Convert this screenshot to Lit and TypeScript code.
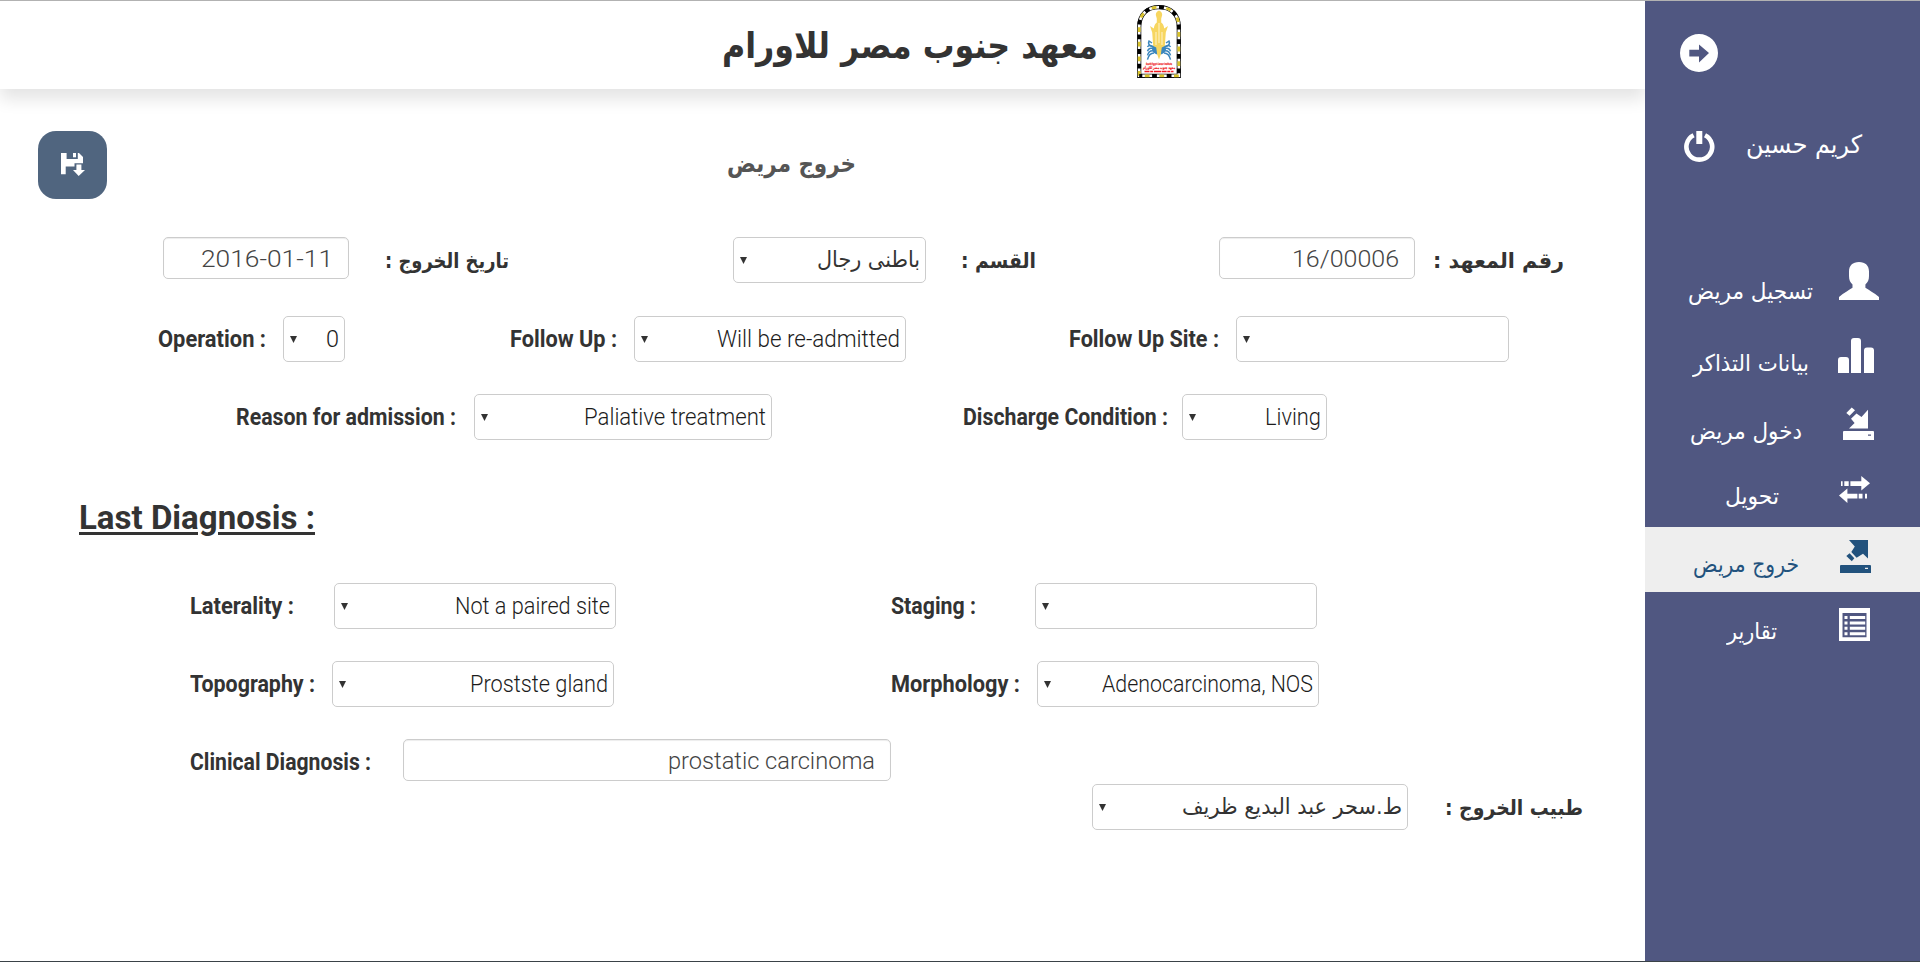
import { LitElement, html, css, svg } from "lit";
import { customElement, property } from "lit/decorators.js";
import { classMap } from "lit/directives/class-map.js";

/** One line of text, condensed or widened to the given width in pixels. */
@customElement("fit-text")
class FitText extends LitElement {
  @property({ type: Number }) w = 100;
  @property() text = "";
  @property({ type: Boolean }) underline = false;
  static styles = css`
    :host { display: block; white-space: nowrap; direction: ltr; }
    .line { display: inline-block; transform-origin: 0 50%; white-space: nowrap; unicode-bidi: isolate; }
    .rtl { direction: rtl; }
    .under { text-decoration: underline; text-decoration-thickness: 3px; text-underline-offset: 3px; }
  `;
  render() {
    const rtl = /[\u0600-\u06ff]/.test(this.text);
    return html`<span class=${classMap({ line: true, rtl, under: this.underline })}>${this.text}</span>`;
  }
  updated() {
    this.style.width = this.w + "px";
    const line = this.renderRoot.querySelector(".line") as HTMLElement;
    const fit = () => {
      line.style.transform = "none";
      const natural = line.getBoundingClientRect().width;
      if (natural) line.style.transform = `scaleX(${this.w / natural})`;
    };
    fit();
    document.fonts.ready.then(fit);
  }
}

const isArabic = (t: string) => /[\u0600-\u06ff]/.test(t);

const label = (text: string, w: number) =>
  html`<fit-text class=${classMap({ label: true, ar: isArabic(text) })} .text=${text} .w=${w}></fit-text>`;

const select = (text: string, w: number) => html`
  <div class="select">
    <svg class="caret" width="7" height="7" viewBox="0 0 7 7"><path d="M0 0h7L3.5 7z" /></svg>
    ${text ? html`<fit-text class=${classMap({ value: true, ar: isArabic(text) })} .text=${text} .w=${w}></fit-text>` : ""}
  </div>`;

const input = (text: string, w: number) => html`
  <div class="input"><fit-text class="typed" .text=${text} .w=${w}></fit-text></div>`;

const icons = {
  back: html`<svg width="38" height="38" viewBox="0 0 38 38"><path fill-rule="evenodd" d="M19 0a19 19 0 1 1 0 38a19 19 0 0 1 0-38zM9.3 15.8v6.6h9.7v6.2L29 19L19 10.6v5.2z" /></svg>`,
  power: html`<svg width="31" height="31" viewBox="0 0 31 31"><path d="M12.3 0h6v13h-6z" /><path fill="none" stroke="#fff" stroke-width="4.6" d="M9.6 4.2A12.9 12.9 0 1 0 21 4.2" /></svg>`,
  user: html`<svg width="40" height="38" viewBox="0 0 40 38"><path d="M20 0c6.400 0 10 3.600 10 9.500v4.500c0 3.800-1.200 6.400-3.600 8.600v3.200c3.500 2.300 8.500 5 13.600 9.200v3H0v-3c5-4.200 10-6.900 13.500-9.200v-3.200C11.200 20.400 10 17.800 10 14V9.500C10 3.600 13.600 0 20 0z" /></svg>`,
  stats: html`<svg width="36" height="35" viewBox="0 0 36 35"><path d="M0 35V22q0-3 3-3h5q3 0 3 3v13zM13 35V3q0-3 3-3h4q3 0 3 3v32zM26 35V12.500q0-3 3-3h4q3 0 3 3V35z" /></svg>`,
  enter: html`<svg width="31" height="33" viewBox="0 0 31 33"><path d="M25 2.800V21.600H6l5.600-5.600L8 11.800l5.500-5.400L18.500 10z" /><path d="M3.300 6L8.700 0.500l3.300 2.700L6.600 8.700z" /><path fill-rule="evenodd" d="M0 25q0-1 1-1h29q1 0 1 1v8H0zM25 27.400v1.400h3v-1.400z" /></svg>`,
  transfer: html`<svg width="31" height="27" viewBox="0 0 31 27"><path d="M2 5.300h1.600v4.600H2zM5.300 5.300h4.400v4.600H5.300zM11.400 5.300H22.300V0L31 7.200l-8.700 7.200V9.900H11.400zM8.400 12.500v5.300h10v4.600h-10V27L0 19.600zM19.700 17.800h3.800v4.600h-3.800zM26 17.800h2v4.600h-2z" /></svg>`,
  exit: html`<svg width="31" height="33" viewBox="0 0 31 33"><path d="M9 0H28V18.600L23 13.800L16.600 17.800L11.300 12L14.800 6.600z" /><path d="M6.300 16L9.600 13.200L14.300 18.300L11.800 21.200z" /><path fill-rule="evenodd" d="M0 26q0-1 1-1h29q1 0 1 1v7H0zM25 27.700v1.400h3v-1.400z" /></svg>`,
  list: html`<svg width="31" height="33" viewBox="0 0 31 33"><path fill-rule="evenodd" d="M0 0h31v33H0zM3.500 5v24.300h24V5z" /><path d="M5.500 8h3v3h-3zM10.800 8h15.400v3H10.800zM5.500 13.400h3v3h-3zM10.800 13.400h15.400v3H10.800zM5.500 18.800h3v3h-3zM10.800 18.800h15.400v3H10.800zM5.500 24.200h3v3h-3zM10.800 24.200h15.400v3H10.800z" /></svg>`,
  save: html`<svg width="24" height="23" viewBox="0 0 24 23"><path fill-rule="evenodd" d="M0 0h5.600v6h11.200V0h1.200l4 4v6.200h-8.500v3.300H4.700v7.700H0z" /><path d="M12 0h3v4.300h-3z" /><path d="M15.400 11.600h5v5.400h3.600L17.700 23L12 17h3.400z" /></svg>`,
};

const arch = "M2.200 70.800V22C2.200 9 10.500 2.200 22 2.200S41.800 9 41.800 22V70.800z";
const claws = [0, 1, 2, 3].map(
  (i) => svg`<path d="M17 ${42 + i * 2}q-5 ${-3 + i}-6.500 ${i * 2.200}M27 ${42 + i * 2}q5 ${-3 + i} 6.500 ${i * 2.200}" />`
);
const logo = html`<svg class="logo" width="44" height="73" viewBox="0 0 44 73">
  <path d=${arch} fill="#fff" stroke="#111" stroke-width="4.200" />
  <path d=${arch} fill="none" stroke="#fff" stroke-width="2.600" />
  <path d=${arch} fill="none" stroke="#d8c22a" stroke-width="2.800" stroke-dasharray="4.800 9.800" />
  <path d=${arch} fill="none" stroke="#000" stroke-width="3.800" stroke-dasharray="4.800 9.800" stroke-dashoffset="-7.300" />
  <g fill="none" stroke="#3b86bd" stroke-width="1.500">
    ${claws}
    <path d="M16 42q-6-2-4-6l3 2M28 42q6-2 4-6l-3 2" />
  </g>
  <ellipse cx="22" cy="44" rx="7" ry="5.500" fill="#3b86bd" />
  <path fill="#f7d660" d="M22 5.500q3.200 1 3.200 4.500l-1 3.500v4q2.500 1.500 3 6l3.800-2.500-2.200 6.500-1 13.500-3 1.500-1 7-1.800 5-1.800-5-1-7-3-1.500-1-13.500-2.200-6.500 3.800 2.500q.5-4.500 3-6v-4l-1-3.500q0-3.500 3.200-4.500z" />
  <path fill="none" stroke="#fff7d8" stroke-width=".9" d="M22 18v20M19 27v13M25 27v13" />
  <g fill="#f01820" stroke="#f01820" stroke-width=".2" font-family="DejaVu Sans" font-weight="bold" text-anchor="middle">
    <text transform="translate(22 59.700) scale(.5 1)" font-size="3.200">South Egypt Cancer Institute</text>
    <text transform="translate(22 63.600) scale(.68 1)" font-size="4">معهد جنوب مصر للاورام</text>
  </g>
  <path stroke="#f01820" stroke-width="1.500" stroke-dasharray="5 .7 3 .8 7 .6" d="M7.500 66.600h29" />
</svg>`;

interface Item { text: string; icon: unknown; start: number; w: number; iconX: number; cls: string }
const menu: Item[] = [
  { text: "تسجيل مريض", icon: icons.user, start: 43, w: 125, iconX: 194, cls: "register" },
  { text: "بيانات التذاكر", icon: icons.stats, start: 48, w: 116, iconX: 193, cls: "tickets" },
  { text: "دخول مريض", icon: icons.enter, start: 45, w: 112, iconX: 198, cls: "enter" },
  { text: "تحويل", icon: icons.transfer, start: 80, w: 54, iconX: 194, cls: "transfer" },
  { text: "خروج مريض", icon: icons.exit, start: 48, w: 106, iconX: 195, cls: "active" },
  { text: "تقارير", icon: icons.list, start: 82, w: 50, iconX: 194, cls: "reports" },
];

@customElement("app-root")
class AppRoot extends LitElement {
  static styles = css`
    :host { display: block; font-family: Roboto, "Noto Sans", sans-serif; color: #333; }
    * { box-sizing: border-box; }
    svg { display: block; }
    .page { display: grid; grid-template-columns: 1645px 275px; height: 962px; background: #fff; border-top: 1px solid #b2b2b2; border-bottom: 1px solid #3a4248; overflow: hidden; }
    .ar { font-family: "DejaVu Sans", sans-serif; }
    .main { display: flex; flex-direction: column; overflow: hidden; }
    .header { flex: none; height: 88px; display: flex; align-items: flex-start; padding: 4px 0 0 722px; gap: 39px; box-shadow: 0 10px 16px rgba(0, 0, 0, .11); }
    .title { font-size: 36px; font-weight: 700; line-height: 40px; padding-top: 21px; }
    .bar { flex: none; display: flex; align-items: flex-start; padding: 42px 0 0 38px; height: 148px; }
    .save { width: 69px; height: 68px; border: 0; border-radius: 18px; background: #50657f; display: flex; align-items: center; justify-content: center; padding: 0 0 1px 1px; fill: #fff; }
    .heading { margin-left: 620px; padding-top: 18px; font-size: 25px; line-height: 29px; font-weight: 700; color: #555; }
    .row { flex: none; display: grid; align-items: start; height: 46px; }
    .r1 { padding-left: 163px; grid-template-columns: 222px 348px 228px 258px 214px 130px; }
    .r2 { margin-top: 33px; padding-left: 158px; grid-template-columns: 125px 227px 124px 435px 167px 273px; }
    .r3 { margin-top: 32px; padding-left: 236px; grid-template-columns: 238px 489px 219px 145px; }
    .r4 { margin-top: 39px; padding-left: 190px; grid-template-columns: 144px 557px 144px 282px; }
    .r5 { margin-top: 32px; padding-left: 190px; grid-template-columns: 142px 559px 146px 282px; }
    .r6 { margin-top: 32px; padding-left: 190px; grid-template-columns: 213px 488px; height: 45px; }
    .r7 { padding-left: 1092px; grid-template-columns: 353px 138px; }
    .select, .input { border: 1px solid #ccc; border-radius: 5px; background: #fff; display: flex; align-items: center; justify-content: space-between; }
    .select { height: 46px; padding: 0 5px 0 6px; }
    .input { height: 42px; justify-content: flex-end; padding: 0 15px; box-shadow: inset 0 1px 1px rgba(0, 0, 0, .075); }
    .caret { fill: #333; }
    .w62 { width: 62px; } .w145 { width: 145px; } .w186 { width: 186px; } .w193 { width: 193px; } .w196 { width: 196px; }
    .w272 { width: 272px; } .w282 { width: 282px; } .w298 { width: 298px; } .w316 { width: 316px; }
    .label { font-size: 23px; font-weight: 700; line-height: 46px; height: 46px; padding-top: 1px; }
    .label.ar { font-size: 21px; }
    .value { font-size: 23px; font-weight: 300; line-height: 44px; height: 44px; padding-top: 1px; color: #1c1c1c; }
    .value.ar { font-size: 22px; font-weight: 400; padding-top: 0; color: #333; }
    .typed { font-size: 24px; font-weight: 300; line-height: 42px; padding-top: 2px; color: #444; }
    .section { flex: none; margin: 55px 0 0 79px; width: 237px; font-size: 33px; font-weight: 700; line-height: 44px; height: 49px; padding-top: 1px; }
    .side { background: #505781; color: #fff; fill: #fff; display: flex; flex-direction: column; }
    .back { padding: 33px 0 0 35px; height: 130px; }
    .account { display: grid; grid-template-columns: 62px 114px; padding-left: 39px; height: 106px; }
    .account .name { font-size: 25px; line-height: 28px; }
    .item { display: grid; align-items: start; font-size: 23px; }
    .item .text { line-height: 26px; }
    .register { height: 70px; } .register .icon { padding-top: 25px; } .register .text { padding-top: 41px; }
    .tickets { height: 70px; } .tickets .icon { padding-top: 31px; } .tickets .text { padding-top: 43px; }
    .enter { height: 70px; } .enter .icon { padding-top: 30px; } .enter .text { padding-top: 41px; }
    .transfer { height: 80px; } .transfer .icon { padding-top: 29px; } .transfer .text { padding-top: 36px; }
    .active { height: 65px; background: #eee; color: #22527d; fill: #22527d; } .active .icon { padding-top: 13px; } .active .text { padding-top: 24px; }
    .reports { height: 70px; } .reports .icon { padding-top: 16px; } .reports .text { padding-top: 26px; }
  `;

  render() {
    return html`<div class="page">
      <div class="main">
        <header class="header">
          <fit-text class="title ar" .text=${"معهد جنوب مصر للاورام"} .w=${376}></fit-text>
          ${logo}
        </header>
        <div class="bar">
          <button class="save">${icons.save}</button>
          <fit-text class="heading ar" .text=${"خروج مريض"} .w=${129}></fit-text>
        </div>
        <div class="row r1">
          <div class="w186">${input("2016-01-11", 132)}</div>${label("تاريخ الخروج :", 124)}
          <div class="w193">${select("باطنى رجال", 103)}</div>${label("القسم :", 75)}
          <div class="w196">${input("16/00006", 107)}</div>${label("رقم المعهد :", 131)}
        </div>
        <div class="row r2">
          ${label("Operation :", 108)}<div class="w62">${select("0", 13)}</div>
          ${label("Follow Up :", 107)}<div class="w272">${select("Will be re-admitted", 183)}</div>
          ${label("Follow Up Site :", 150)}<div>${select("", 0)}</div>
        </div>
        <div class="row r3">
          ${label("Reason for admission :", 220)}<div class="w298">${select("Paliative treatment", 182)}</div>
          ${label("Discharge Condition :", 205)}<div class="w145">${select("Living", 56)}</div>
        </div>
        <div class="section"><fit-text underline .text=${"Last Diagnosis :"} .w=${236}></fit-text></div>
        <div class="row r4">
          ${label("Laterality :", 104)}<div class="w282">${select("Not a paired site", 155)}</div>
          ${label("Staging :", 85)}<div>${select("", 0)}</div>
        </div>
        <div class="row r5">
          ${label("Topography :", 125)}<div class="w282">${select("Prostste gland", 138)}</div>
          ${label("Morphology :", 129)}<div>${select("Adenocarcinoma, NOS", 211)}</div>
        </div>
        <div class="row r6">${label("Clinical Diagnosis :", 181)}<div>${input("prostatic carcinoma", 207)}</div></div>
        <div class="row r7"><div class="w316">${select("ط.سحر عبد البديع ظريف", 220)}</div>${label("طبيب الخروج :", 138)}</div>
      </div>
      <aside class="side">
        <div class="back">${icons.back}</div>
        <div class="account"><div>${icons.power}</div><fit-text class="name ar" .text=${"كريم حسين"} .w=${116}></fit-text></div>
        ${menu.map(
          (m) => html`<div class="item ar ${m.cls}" style="grid-template-columns: ${m.iconX - m.start}px auto; padding-left: ${m.start}px">
            <fit-text class="text" .text=${m.text} .w=${m.w}></fit-text>
            <div class="icon">${m.icon}</div>
          </div>`
        )}
      </aside>
    </div>`;
  }
}
